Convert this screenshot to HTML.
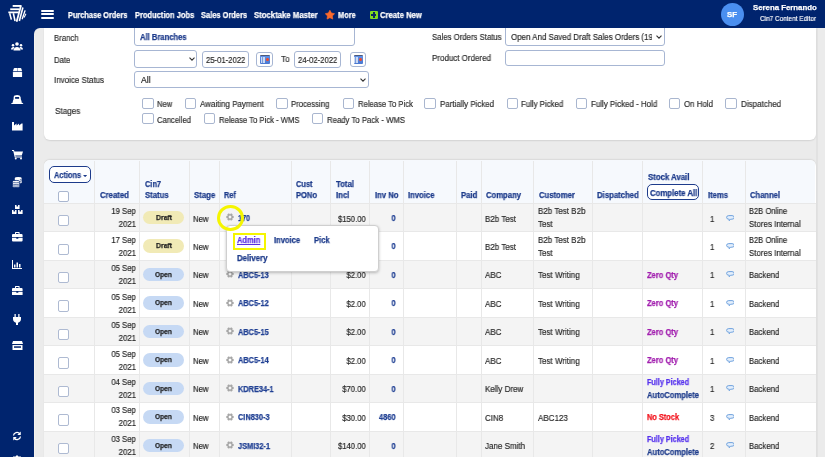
<!DOCTYPE html>
<html><head><meta charset="utf-8"><style>
html,body{margin:0;padding:0;}
body{width:825px;height:457px;overflow:hidden;position:relative;background:#00246e;font-family:"Liberation Sans", sans-serif;}
.a{position:absolute;}
.t{position:absolute;white-space:nowrap;line-height:1;will-change:transform;}
</style></head><body>
<div class="a" style="left:34px;top:28.3px;width:791px;height:440px;background:#ebebeb;border-top-left-radius:6px"></div>
<div class="a" style="left:816px;top:28px;width:2.2px;height:440px;background:#e2e2e2"></div><div class="a" style="left:34.3px;top:36px;width:1px;height:430px;background:#f4f2ee"></div><div class="a" style="left:44px;top:28.3px;width:771.5px;height:111.8px;background:#fff;border-radius:0 0 6px 6px;box-shadow:0 1px 1.5px rgba(0,0,0,.10)"></div>
<div class="a" style="left:44px;top:160.2px;width:771.5px;height:320px;background:#fff;border-radius:6px 6px 0 0;overflow:hidden;box-shadow:0 -0.5px 1.5px rgba(0,0,0,.08)">
  <div class="a" style="left:0;top:0;width:771px;height:42.5px;background:#f6f9fd"></div>
</div>
<div class="a" style="left:142.1px;top:97.9px;width:11.6px;height:10.9px;border:1.15px solid #a9b6cf;border-radius:2px;box-sizing:border-box;background:#fff;"></div><div class="a" style="left:184.8px;top:97.9px;width:11.6px;height:10.9px;border:1.15px solid #a9b6cf;border-radius:2px;box-sizing:border-box;background:#fff;"></div><div class="a" style="left:276.2px;top:97.9px;width:11.6px;height:10.9px;border:1.15px solid #a9b6cf;border-radius:2px;box-sizing:border-box;background:#fff;"></div><div class="a" style="left:342.5px;top:97.9px;width:11.6px;height:10.9px;border:1.15px solid #a9b6cf;border-radius:2px;box-sizing:border-box;background:#fff;"></div><div class="a" style="left:424.4px;top:97.9px;width:11.6px;height:10.9px;border:1.15px solid #a9b6cf;border-radius:2px;box-sizing:border-box;background:#fff;"></div><div class="a" style="left:506.9px;top:97.9px;width:11.6px;height:10.9px;border:1.15px solid #a9b6cf;border-radius:2px;box-sizing:border-box;background:#fff;"></div><div class="a" style="left:575.6px;top:97.9px;width:11.6px;height:10.9px;border:1.15px solid #a9b6cf;border-radius:2px;box-sizing:border-box;background:#fff;"></div><div class="a" style="left:668.9px;top:97.9px;width:11.6px;height:10.9px;border:1.15px solid #a9b6cf;border-radius:2px;box-sizing:border-box;background:#fff;"></div><div class="a" style="left:725.3px;top:97.9px;width:11.6px;height:10.9px;border:1.15px solid #a9b6cf;border-radius:2px;box-sizing:border-box;background:#fff;"></div><div class="a" style="left:142.1px;top:113.4px;width:11.6px;height:10.9px;border:1.15px solid #a9b6cf;border-radius:2px;box-sizing:border-box;background:#fff;"></div><div class="a" style="left:203.9px;top:113.4px;width:11.6px;height:10.9px;border:1.15px solid #a9b6cf;border-radius:2px;box-sizing:border-box;background:#fff;"></div><div class="a" style="left:311.9px;top:113.4px;width:11.6px;height:10.9px;border:1.15px solid #a9b6cf;border-radius:2px;box-sizing:border-box;background:#fff;"></div><div class="a" style="left:134px;top:20px;width:220.8px;height:26.4px;border:1px solid #a7b6d3;border-radius:3px;box-sizing:border-box;background:#fff;"></div><div class="a" style="left:134px;top:50.2px;width:62.8px;height:17.4px;border:1px solid #a7b6d3;border-radius:3px;box-sizing:border-box;background:#fff;"></div><div class="a" style="left:201.5px;top:51.3px;width:47.3px;height:16.7px;border:1px solid #a7b6d3;border-radius:3px;box-sizing:border-box;background:#fff;"></div><div class="a" style="left:294.4px;top:51.3px;width:47px;height:16.7px;border:1px solid #a7b6d3;border-radius:3px;box-sizing:border-box;background:#fff;"></div><div class="a" style="left:134px;top:71px;width:234.6px;height:17.3px;border:1px solid #a7b6d3;border-radius:3px;box-sizing:border-box;background:#fff;"></div><div class="a" style="left:504.6px;top:20px;width:160.2px;height:25.5px;border:1px solid #a7b6d3;border-radius:3px;box-sizing:border-box;background:#fff;"></div><div class="a" style="left:504.6px;top:49.8px;width:160.8px;height:16.4px;border:1px solid #a7b6d3;border-radius:3px;box-sizing:border-box;background:#fff;"></div><div class="a" style="left:256.3px;top:52px;width:16.4px;height:14.9px;border:1px solid #a7b6d3;border-radius:3px;box-sizing:border-box;background:#fff;"></div><div class="a" style="left:260.2px;top:54.7px;width:9.9px;height:9.3px;background:linear-gradient(#4d5a7a 0,#4d5a7a 0.8px,#5f90e8 0.8px,#4a78d0 100%);border-radius:1px;"></div><div class="a" style="left:260.6px;top:57.2px;width:4.5px;height:6px;background:repeating-linear-gradient(90deg,#dfe8f7 0,#dfe8f7 1.2px,#7fa1de 1.2px,#7fa1de 1.6px);opacity:.85;"></div><div class="a" style="left:265.6px;top:57.6px;width:3.4px;height:3.8px;background:#ee4a2a;border-radius:50%;"></div><div class="a" style="left:349.6px;top:52px;width:16.4px;height:14.9px;border:1px solid #a7b6d3;border-radius:3px;box-sizing:border-box;background:#fff;"></div><div class="a" style="left:353.5px;top:54.7px;width:9.9px;height:9.3px;background:linear-gradient(#4d5a7a 0,#4d5a7a 0.8px,#5f90e8 0.8px,#4a78d0 100%);border-radius:1px;"></div><div class="a" style="left:353.9px;top:57.2px;width:4.5px;height:6px;background:repeating-linear-gradient(90deg,#dfe8f7 0,#dfe8f7 1.2px,#7fa1de 1.2px,#7fa1de 1.6px);opacity:.85;"></div><div class="a" style="left:358.9px;top:57.6px;width:3.4px;height:3.8px;background:#ee4a2a;border-radius:50%;"></div><div class="a" style="left:44px;top:202.9px;width:771.5px;height:28.45px;background:#f4f4f4;border-top:1px solid #e8e8e8;box-sizing:border-box;"></div><div class="a" style="left:57.5px;top:215.1px;width:11.4px;height:11.3px;border:1.2px solid #aebad2;border-radius:2px;box-sizing:border-box;background:#fff;"></div><div class="a" style="left:143.2px;top:211.03px;width:40.6px;height:13.4px;background:#f1eab6;border-radius:7px;"></div><svg class="a" style="left:226.3px;top:213.43px" width="8" height="8" viewBox="0 0 16 16"><path fill="#a6a6a6" fill-rule="evenodd" d="M13.11 5.72L15.34 6.05L15.34 9.95L13.11 10.28L12.53 11.29L13.36 13.38L9.98 15.34L8.58 13.57L7.42 13.57L6.02 15.34L2.64 13.38L3.47 11.29L2.89 10.28L0.66 9.95L0.66 6.05L2.89 5.72L3.47 4.71L2.64 2.62L6.02 0.66L7.42 2.43L8.58 2.43L9.98 0.66L13.36 2.62L12.53 4.71ZM8 5.2a2.8 2.8 0 1 0 0.01 0z"/></svg><svg class="a" style="left:725.6px;top:214.53px" width="8.8" height="7.2" viewBox="0 0 22 18"><path fill="#e3eefb" stroke="#6b9fdc" stroke-width="2.4" d="M7 1.5h8a5.5 4.5 0 010 9h-3.5l-3.5 4v-4H7a5.5 4.5 0 010-9z"/></svg><div class="a" style="left:44px;top:231.35px;width:771.5px;height:28.45px;background:#ffffff;border-top:1px solid #e8e8e8;box-sizing:border-box;"></div><div class="a" style="left:57.5px;top:243.55px;width:11.4px;height:11.3px;border:1.2px solid #aebad2;border-radius:2px;box-sizing:border-box;background:#fff;"></div><div class="a" style="left:143.2px;top:239.47px;width:40.6px;height:13.4px;background:#f1eab6;border-radius:7px;"></div><svg class="a" style="left:725.6px;top:242.97px" width="8.8" height="7.2" viewBox="0 0 22 18"><path fill="#e3eefb" stroke="#6b9fdc" stroke-width="2.4" d="M7 1.5h8a5.5 4.5 0 010 9h-3.5l-3.5 4v-4H7a5.5 4.5 0 010-9z"/></svg><div class="a" style="left:44px;top:259.8px;width:771.5px;height:28.45px;background:#f4f4f4;border-top:1px solid #e8e8e8;box-sizing:border-box;"></div><div class="a" style="left:57.5px;top:272px;width:11.4px;height:11.3px;border:1.2px solid #aebad2;border-radius:2px;box-sizing:border-box;background:#fff;"></div><div class="a" style="left:143.2px;top:267.93px;width:40.6px;height:13.4px;background:#c6d9f4;border-radius:7px;"></div><svg class="a" style="left:226.3px;top:270.33px" width="8" height="8" viewBox="0 0 16 16"><path fill="#a6a6a6" fill-rule="evenodd" d="M13.11 5.72L15.34 6.05L15.34 9.95L13.11 10.28L12.53 11.29L13.36 13.38L9.98 15.34L8.58 13.57L7.42 13.57L6.02 15.34L2.64 13.38L3.47 11.29L2.89 10.28L0.66 9.95L0.66 6.05L2.89 5.72L3.47 4.71L2.64 2.62L6.02 0.66L7.42 2.43L8.58 2.43L9.98 0.66L13.36 2.62L12.53 4.71ZM8 5.2a2.8 2.8 0 1 0 0.01 0z"/></svg><svg class="a" style="left:725.6px;top:271.43px" width="8.8" height="7.2" viewBox="0 0 22 18"><path fill="#e3eefb" stroke="#6b9fdc" stroke-width="2.4" d="M7 1.5h8a5.5 4.5 0 010 9h-3.5l-3.5 4v-4H7a5.5 4.5 0 010-9z"/></svg><div class="a" style="left:44px;top:288.25px;width:771.5px;height:28.45px;background:#ffffff;border-top:1px solid #e8e8e8;box-sizing:border-box;"></div><div class="a" style="left:57.5px;top:300.45px;width:11.4px;height:11.3px;border:1.2px solid #aebad2;border-radius:2px;box-sizing:border-box;background:#fff;"></div><div class="a" style="left:143.2px;top:296.38px;width:40.6px;height:13.4px;background:#c6d9f4;border-radius:7px;"></div><svg class="a" style="left:226.3px;top:298.78px" width="8" height="8" viewBox="0 0 16 16"><path fill="#a6a6a6" fill-rule="evenodd" d="M13.11 5.72L15.34 6.05L15.34 9.95L13.11 10.28L12.53 11.29L13.36 13.38L9.98 15.34L8.58 13.57L7.42 13.57L6.02 15.34L2.64 13.38L3.47 11.29L2.89 10.28L0.66 9.95L0.66 6.05L2.89 5.72L3.47 4.71L2.64 2.62L6.02 0.66L7.42 2.43L8.58 2.43L9.98 0.66L13.36 2.62L12.53 4.71ZM8 5.2a2.8 2.8 0 1 0 0.01 0z"/></svg><svg class="a" style="left:725.6px;top:299.88px" width="8.8" height="7.2" viewBox="0 0 22 18"><path fill="#e3eefb" stroke="#6b9fdc" stroke-width="2.4" d="M7 1.5h8a5.5 4.5 0 010 9h-3.5l-3.5 4v-4H7a5.5 4.5 0 010-9z"/></svg><div class="a" style="left:44px;top:316.7px;width:771.5px;height:28.45px;background:#f4f4f4;border-top:1px solid #e8e8e8;box-sizing:border-box;"></div><div class="a" style="left:57.5px;top:328.9px;width:11.4px;height:11.3px;border:1.2px solid #aebad2;border-radius:2px;box-sizing:border-box;background:#fff;"></div><div class="a" style="left:143.2px;top:324.82px;width:40.6px;height:13.4px;background:#c6d9f4;border-radius:7px;"></div><svg class="a" style="left:226.3px;top:327.23px" width="8" height="8" viewBox="0 0 16 16"><path fill="#a6a6a6" fill-rule="evenodd" d="M13.11 5.72L15.34 6.05L15.34 9.95L13.11 10.28L12.53 11.29L13.36 13.38L9.98 15.34L8.58 13.57L7.42 13.57L6.02 15.34L2.64 13.38L3.47 11.29L2.89 10.28L0.66 9.95L0.66 6.05L2.89 5.72L3.47 4.71L2.64 2.62L6.02 0.66L7.42 2.43L8.58 2.43L9.98 0.66L13.36 2.62L12.53 4.71ZM8 5.2a2.8 2.8 0 1 0 0.01 0z"/></svg><svg class="a" style="left:725.6px;top:328.32px" width="8.8" height="7.2" viewBox="0 0 22 18"><path fill="#e3eefb" stroke="#6b9fdc" stroke-width="2.4" d="M7 1.5h8a5.5 4.5 0 010 9h-3.5l-3.5 4v-4H7a5.5 4.5 0 010-9z"/></svg><div class="a" style="left:44px;top:345.15px;width:771.5px;height:28.45px;background:#ffffff;border-top:1px solid #e8e8e8;box-sizing:border-box;"></div><div class="a" style="left:57.5px;top:357.35px;width:11.4px;height:11.3px;border:1.2px solid #aebad2;border-radius:2px;box-sizing:border-box;background:#fff;"></div><div class="a" style="left:143.2px;top:353.27px;width:40.6px;height:13.4px;background:#c6d9f4;border-radius:7px;"></div><svg class="a" style="left:226.3px;top:355.68px" width="8" height="8" viewBox="0 0 16 16"><path fill="#a6a6a6" fill-rule="evenodd" d="M13.11 5.72L15.34 6.05L15.34 9.95L13.11 10.28L12.53 11.29L13.36 13.38L9.98 15.34L8.58 13.57L7.42 13.57L6.02 15.34L2.64 13.38L3.47 11.29L2.89 10.28L0.66 9.95L0.66 6.05L2.89 5.72L3.47 4.71L2.64 2.62L6.02 0.66L7.42 2.43L8.58 2.43L9.98 0.66L13.36 2.62L12.53 4.71ZM8 5.2a2.8 2.8 0 1 0 0.01 0z"/></svg><svg class="a" style="left:725.6px;top:356.77px" width="8.8" height="7.2" viewBox="0 0 22 18"><path fill="#e3eefb" stroke="#6b9fdc" stroke-width="2.4" d="M7 1.5h8a5.5 4.5 0 010 9h-3.5l-3.5 4v-4H7a5.5 4.5 0 010-9z"/></svg><div class="a" style="left:44px;top:373.6px;width:771.5px;height:28.45px;background:#f4f4f4;border-top:1px solid #e8e8e8;box-sizing:border-box;"></div><div class="a" style="left:57.5px;top:385.8px;width:11.4px;height:11.3px;border:1.2px solid #aebad2;border-radius:2px;box-sizing:border-box;background:#fff;"></div><div class="a" style="left:143.2px;top:381.73px;width:40.6px;height:13.4px;background:#c6d9f4;border-radius:7px;"></div><svg class="a" style="left:226.3px;top:384.13px" width="8" height="8" viewBox="0 0 16 16"><path fill="#a6a6a6" fill-rule="evenodd" d="M13.11 5.72L15.34 6.05L15.34 9.95L13.11 10.28L12.53 11.29L13.36 13.38L9.98 15.34L8.58 13.57L7.42 13.57L6.02 15.34L2.64 13.38L3.47 11.29L2.89 10.28L0.66 9.95L0.66 6.05L2.89 5.72L3.47 4.71L2.64 2.62L6.02 0.66L7.42 2.43L8.58 2.43L9.98 0.66L13.36 2.62L12.53 4.71ZM8 5.2a2.8 2.8 0 1 0 0.01 0z"/></svg><svg class="a" style="left:725.6px;top:385.23px" width="8.8" height="7.2" viewBox="0 0 22 18"><path fill="#e3eefb" stroke="#6b9fdc" stroke-width="2.4" d="M7 1.5h8a5.5 4.5 0 010 9h-3.5l-3.5 4v-4H7a5.5 4.5 0 010-9z"/></svg><div class="a" style="left:44px;top:402.05px;width:771.5px;height:28.45px;background:#ffffff;border-top:1px solid #e8e8e8;box-sizing:border-box;"></div><div class="a" style="left:57.5px;top:414.25px;width:11.4px;height:11.3px;border:1.2px solid #aebad2;border-radius:2px;box-sizing:border-box;background:#fff;"></div><div class="a" style="left:143.2px;top:410.18px;width:40.6px;height:13.4px;background:#c6d9f4;border-radius:7px;"></div><svg class="a" style="left:226.3px;top:412.58px" width="8" height="8" viewBox="0 0 16 16"><path fill="#a6a6a6" fill-rule="evenodd" d="M13.11 5.72L15.34 6.05L15.34 9.95L13.11 10.28L12.53 11.29L13.36 13.38L9.98 15.34L8.58 13.57L7.42 13.57L6.02 15.34L2.64 13.38L3.47 11.29L2.89 10.28L0.66 9.95L0.66 6.05L2.89 5.72L3.47 4.71L2.64 2.62L6.02 0.66L7.42 2.43L8.58 2.43L9.98 0.66L13.36 2.62L12.53 4.71ZM8 5.2a2.8 2.8 0 1 0 0.01 0z"/></svg><svg class="a" style="left:725.6px;top:413.68px" width="8.8" height="7.2" viewBox="0 0 22 18"><path fill="#e3eefb" stroke="#6b9fdc" stroke-width="2.4" d="M7 1.5h8a5.5 4.5 0 010 9h-3.5l-3.5 4v-4H7a5.5 4.5 0 010-9z"/></svg><div class="a" style="left:44px;top:430.5px;width:771.5px;height:28.45px;background:#f4f4f4;border-top:1px solid #e8e8e8;box-sizing:border-box;"></div><div class="a" style="left:57.5px;top:442.7px;width:11.4px;height:11.3px;border:1.2px solid #aebad2;border-radius:2px;box-sizing:border-box;background:#fff;"></div><div class="a" style="left:143.2px;top:438.62px;width:40.6px;height:13.4px;background:#c6d9f4;border-radius:7px;"></div><svg class="a" style="left:226.3px;top:441.03px" width="8" height="8" viewBox="0 0 16 16"><path fill="#a6a6a6" fill-rule="evenodd" d="M13.11 5.72L15.34 6.05L15.34 9.95L13.11 10.28L12.53 11.29L13.36 13.38L9.98 15.34L8.58 13.57L7.42 13.57L6.02 15.34L2.64 13.38L3.47 11.29L2.89 10.28L0.66 9.95L0.66 6.05L2.89 5.72L3.47 4.71L2.64 2.62L6.02 0.66L7.42 2.43L8.58 2.43L9.98 0.66L13.36 2.62L12.53 4.71ZM8 5.2a2.8 2.8 0 1 0 0.01 0z"/></svg><svg class="a" style="left:725.6px;top:442.12px" width="8.8" height="7.2" viewBox="0 0 22 18"><path fill="#e3eefb" stroke="#6b9fdc" stroke-width="2.4" d="M7 1.5h8a5.5 4.5 0 010 9h-3.5l-3.5 4v-4H7a5.5 4.5 0 010-9z"/></svg>
<div class="a" style="left:93.9px;top:160.5px;width:1px;height:300px;background:#e8e8e8;"></div><div class="a" style="left:138.9px;top:160.5px;width:1px;height:300px;background:#e8e8e8;"></div><div class="a" style="left:189.1px;top:160.5px;width:1px;height:300px;background:#e8e8e8;"></div><div class="a" style="left:218.7px;top:160.5px;width:1px;height:300px;background:#e8e8e8;"></div><div class="a" style="left:291px;top:160.5px;width:1px;height:300px;background:#e8e8e8;"></div><div class="a" style="left:330.3px;top:160.5px;width:1px;height:300px;background:#e8e8e8;"></div><div class="a" style="left:369.3px;top:160.5px;width:1px;height:300px;background:#e8e8e8;"></div><div class="a" style="left:403.3px;top:160.5px;width:1px;height:300px;background:#e8e8e8;"></div><div class="a" style="left:456.1px;top:160.5px;width:1px;height:300px;background:#e8e8e8;"></div><div class="a" style="left:480.5px;top:160.5px;width:1px;height:300px;background:#e8e8e8;"></div><div class="a" style="left:533.2px;top:160.5px;width:1px;height:300px;background:#e8e8e8;"></div><div class="a" style="left:592px;top:160.5px;width:1px;height:300px;background:#e8e8e8;"></div><div class="a" style="left:642.1px;top:160.5px;width:1px;height:300px;background:#e8e8e8;"></div><div class="a" style="left:702px;top:160.5px;width:1px;height:300px;background:#e8e8e8;"></div><div class="a" style="left:744.9px;top:160.5px;width:1px;height:300px;background:#e8e8e8;"></div>
<div class="a" style="left:48.9px;top:166.1px;width:41.9px;height:16.6px;border:1.7px solid #1d3b8b;border-radius:5px;box-sizing:border-box;background:#fff"></div><svg class="a" style="left:83.3px;top:174.6px" width="4.2" height="2.2" viewBox="0 0 4 2"><path fill="#1d3b8b" d="M0 0h4L2 2z"/></svg><div class="a" style="left:646.8px;top:184.0px;width:52.4px;height:16.2px;border:1.7px solid #1d3b8b;border-radius:5px;box-sizing:border-box;background:#fff"></div><div class="a" style="left:57.8px;top:190.5px;width:11px;height:11px;border:1px solid #a9b6cf;border-radius:2px;box-sizing:border-box;background:#fff"></div>
<svg class="a" style="left:188.8px;top:57px" width="6" height="4" viewBox="0 0 12 8"><path fill="none" stroke="#333" stroke-width="2.2" d="M1 1.2l5 5 5-5"/></svg><svg class="a" style="left:360.4px;top:77.8px" width="6" height="4" viewBox="0 0 12 8"><path fill="none" stroke="#333" stroke-width="2.2" d="M1 1.2l5 5 5-5"/></svg><svg class="a" style="left:656.4px;top:34.8px" width="6" height="4" viewBox="0 0 12 8"><path fill="none" stroke="#333" stroke-width="2.2" d="M1 1.2l5 5 5-5"/></svg>
<div class="a" style="left:0;top:0;width:825px;height:28.3px;background:#00246e"></div><svg class="a" style="left:4px;top:2px" width="30" height="24" viewBox="0 0 571 457"><g stroke="#fff" stroke-linecap="butt" fill="none"><path d="M165 75H322" stroke-width="36"/><path d="M118 138H290" stroke-width="34"/><path d="M82 198H282" stroke-width="34"/><path d="M325 60L240 375" stroke-width="34"/><path d="M108 215L140 335" stroke-width="30"/><path d="M178 215L210 362" stroke-width="30"/><path d="M360 105L292 362" stroke-width="30"/><path d="M402 160L345 330" stroke-width="26"/><path d="M418 225L383 295" stroke-width="20"/></g></svg><div class="a" style="left:40.5px;top:9.9px;width:13px;height:2px;background:#fff;border-radius:1px"></div><div class="a" style="left:40.5px;top:13.3px;width:13px;height:2px;background:#fff;border-radius:1px"></div><div class="a" style="left:40.5px;top:16.8px;width:13px;height:2px;background:#fff;border-radius:1px"></div><svg class="a" style="left:325.0px;top:10.0px" width="9.8" height="9.8" viewBox="0 0 24 24"><path fill="#fb6a2c" stroke="#fb6a2c" stroke-width="1.6" stroke-linejoin="round" d="M12.00 0.60L15.70 7.50L23.41 8.89L17.99 14.55L19.05 22.31L12.00 18.90L4.95 22.31L6.01 14.55L0.59 8.89L8.30 7.50Z"/></svg><div class="a" style="left:369.5px;top:11.0px;width:8.1px;height:8.1px;background:#7fdc1f;border-radius:1px"></div><div class="a" style="left:372.5px;top:12.3px;width:2.1px;height:5.5px;background:#0a2a60"></div><div class="a" style="left:370.8px;top:14.0px;width:5.5px;height:2.1px;background:#0a2a60"></div><div class="a" style="left:720.9px;top:2.7px;width:23.2px;height:23.2px;background:#4a8ff0;border-radius:50%"></div>
<svg class="a" style="left:11.3px;top:42.25px" width="12" height="8.5" viewBox="0 0 24 17"><g fill="#fff"><circle cx="12" cy="4" r="3.6"/><path d="M5 17c0-4 3-7 7-7s7 3 7 7z"/><circle cx="4" cy="6.5" r="2.5"/><circle cx="20" cy="6.5" r="2.5"/><path d="M0 15c0-3 2-5 4.5-5 1 0 2 .3 2.5.8-1.5 1.2-2.3 2.5-2.4 4.2z"/><path d="M24 15c0-3-2-5-4.5-5-1 0-2 .3-2.5.8 1.5 1.2 2.3 2.5 2.4 4.2z"/></g></svg><svg class="a" style="left:9px;top:64px" width="18" height="18" viewBox="0 0 18 18"><g fill="#fff"><path d="M3.9 7.3L4.8 4.5Q5 4.1 5.5 4.1H11.6Q12.1 4.1 12.3 4.5L13.1 7.3Z"/><rect x="3.9" y="7.9" width="9.2" height="5.2" rx="0.6"/></g><rect x="8.2" y="4" width="0.6" height="3.4" fill="#00246e" opacity=".6"/></svg><svg class="a" style="left:9px;top:90px" width="18" height="16" viewBox="0 0 18 16"><g fill="#fff"><path d="M4.4 11.2L4.7 7Q4.9 5.1 8.1 5.1Q11.2 5.1 11.6 7L12.1 11.2Z"/><ellipse cx="8.2" cy="11.3" rx="4.3" ry="2.3"/><path d="M2.2 13.4L5 11.4H11.4L14.2 13.4V14.1H2.2Z"/></g><rect x="6.1" y="7" width="4" height="1.8" fill="#00246e"/></svg><svg class="a" style="left:12px;top:122px" width="10.6" height="8.6" viewBox="0 0 21 17"><path fill="#fff" d="M0 0h4v7l5-4v4l5-4v4l5-4h2v14H0z"/></svg><svg class="a" style="left:11.8px;top:150px" width="11" height="9.6" viewBox="0 0 22 19"><g fill="#fff"><path d="M0 0h4l.8 3H22l-2.5 8H6.5l.5 2H20v2H5.5L2.5 2H0z"/><circle cx="7.5" cy="17" r="2"/><circle cx="18" cy="17" r="2"/></g></svg><svg class="a" style="left:11px;top:176px" width="13" height="13" viewBox="0 0 13 13"><g fill="#fff"><path d="M3.8 2.1a3.45 1.15 0 0 1 6.9 0v4.3a3.45 1.15 0 0 1-6.9 0z"/><path d="M1.4 5.6a3.7 1.2 0 0 1 7.4 0v4.7a3.7 1.2 0 0 1-7.4 0z" stroke="#00246e" stroke-width="0.8"/></g><g fill="none" stroke="#00246e" stroke-width="0.6"><path d="M8.8 3.9a3.45 1.15 0 0 0 1.9-0.9"/><path d="M8.8 5.4a3.45 1.15 0 0 0 1.9-0.9"/><path d="M1.4 7.4a3.7 1.2 0 0 0 7.4 0"/><path d="M1.4 8.9a3.7 1.2 0 0 0 7.4 0"/><path d="M1.4 5.6a3.7 1.2 0 0 0 7.4 0"/></g></svg><svg class="a" style="left:12px;top:204.8px" width="10.6" height="9.6" viewBox="0 0 21 19"><g fill="#fff"><path d="M6 0h3v3h3V0h3v8H6z"/><path d="M0 10h3v3h3v-3h3v9H0z"/><path d="M12 10h3v3h3v-3h3v9h-9z"/></g></svg><svg class="a" style="left:12px;top:232.4px" width="10.6" height="9.6" viewBox="0 0 21 19"><g fill="#fff"><path d="M7 0h7a1 1 0 011 1v3h-2V2H8v2H6V1a1 1 0 011-1z"/><path d="M0 6a2 2 0 012-2h17a2 2 0 012 2v4H0z"/><path d="M0 11.5h8.5v2h4v-2H21V17a2 2 0 01-2 2H2a2 2 0 01-2-2z"/></g></svg><svg class="a" style="left:12.3px;top:259.5px" width="10" height="9" viewBox="0 0 20 18"><g fill="#fff"><path d="M0 0h2v16h18v2H0z"/><rect x="4" y="9" width="3" height="6"/><rect x="9" y="5" width="3" height="10"/><rect x="14" y="8" width="3" height="7"/></g></svg><svg class="a" style="left:12px;top:285.8px" width="10.6" height="9.6" viewBox="0 0 21 19"><g fill="#fff"><path d="M7 0h7a1 1 0 011 1v3h-2V2H8v2H6V1a1 1 0 011-1z"/><path d="M0 6a2 2 0 012-2h17a2 2 0 012 2v4H0z"/><path d="M0 11.5h8.5v2h4v-2H21V17a2 2 0 01-2 2H2a2 2 0 01-2-2z"/></g></svg><svg class="a" style="left:13.3px;top:313.5px" width="8" height="11" viewBox="0 0 16 22"><g fill="#fff"><rect x="3" y="0" width="2.5" height="6"/><rect x="10.5" y="0" width="2.5" height="6"/><path d="M0 6h16v4c0 4-3 7-6 7.5V22H6v-4.5C3 17 0 14 0 10z"/></g></svg><svg class="a" style="left:11.8px;top:340.6px" width="11" height="9.6" viewBox="0 0 22 19"><g fill="#fff"><path d="M2 0h18l2 6H0z"/><path d="M1 8h20v11H1z"/></g><rect x="4" y="10.5" width="14" height="3" fill="#00246e"/></svg><svg class="a" style="left:12.3px;top:431.2px" width="10" height="10" viewBox="0 0 20 20"><g fill="none" stroke="#fff" stroke-width="2.6"><path d="M3 9a7 7 0 0112.5-3.5"/><path d="M17 11a7 7 0 01-12.5 3.5"/></g><g fill="#fff"><path d="M17.5 1v7h-7z"/><path d="M2.5 19v-7h7z"/></g></svg><svg class="a" style="left:12.3px;top:455px" width="10" height="9" viewBox="0 0 20 18"><path fill="#fff" d="M10 0l3 3h5v6H2V3h5z"/></svg>
<div class="t" style="left:68px;top:10.7px;font-size:8.6px;color:#fff;font-weight:700;-webkit-text-stroke:0.25px #fff;transform:scaleX(0.858);transform-origin:left;">Purchase Orders</div><div class="t" style="left:134.7px;top:10.7px;font-size:8.6px;color:#fff;font-weight:700;-webkit-text-stroke:0.25px #fff;transform:scaleX(0.874);transform-origin:left;">Production Jobs</div><div class="t" style="left:200.6px;top:10.7px;font-size:8.6px;color:#fff;font-weight:700;-webkit-text-stroke:0.25px #fff;transform:scaleX(0.869);transform-origin:left;">Sales Orders</div><div class="t" style="left:253.6px;top:10.7px;font-size:8.6px;color:#fff;font-weight:700;-webkit-text-stroke:0.25px #fff;transform:scaleX(0.902);transform-origin:left;">Stocktake Master</div><div class="t" style="left:337.8px;top:10.7px;font-size:8.6px;color:#fff;font-weight:700;-webkit-text-stroke:0.25px #fff;transform:scaleX(0.861);transform-origin:left;">More</div><div class="t" style="left:379.7px;top:10.7px;font-size:8.6px;color:#fff;font-weight:700;-webkit-text-stroke:0.25px #fff;transform:scaleX(0.895);transform-origin:left;">Create New</div><div class="t" style="left:752.7px;top:3.9px;font-size:7.8px;color:#fff;font-weight:700;-webkit-text-stroke:0.25px #fff;">Serena Fernando</div><div class="t" style="left:760.3px;top:15.03px;font-size:7.34px;color:#fff;-webkit-text-stroke:0.18px #fff;transform:scaleX(0.877);transform-origin:left;">Cin7 Content Editor</div><div class="t" style="left:727px;top:10.5px;font-size:7.4px;color:#fff;font-weight:700;-webkit-text-stroke:0.25px #fff;transform:scaleX(1.058);transform-origin:left;">SF</div><div class="t" style="left:53.9px;top:33.98px;font-size:8.64px;color:#2c2c2c;-webkit-text-stroke:0.18px #2c2c2c;transform:scaleX(0.900);transform-origin:left;">Branch</div><div class="t" style="left:53.9px;top:56.08px;font-size:8.64px;color:#2c2c2c;-webkit-text-stroke:0.18px #2c2c2c;transform:scaleX(0.889);transform-origin:left;">Date</div><div class="t" style="left:53.9px;top:75.58px;font-size:8.64px;color:#2c2c2c;-webkit-text-stroke:0.18px #2c2c2c;transform:scaleX(0.925);transform-origin:left;">Invoice Status</div><div class="t" style="left:54.5px;top:107.48px;font-size:8.64px;color:#2c2c2c;-webkit-text-stroke:0.18px #2c2c2c;transform:scaleX(0.942);transform-origin:left;">Stages</div><div class="t" style="left:140px;top:34.2px;font-size:8.2px;color:#1d3b8b;font-weight:700;-webkit-text-stroke:0.25px #1d3b8b;transform:scaleX(0.929);transform-origin:left;">All Branches</div><div class="t" style="left:141px;top:76.48px;font-size:8.64px;color:#262626;-webkit-text-stroke:0.18px #262626;transform:scaleX(0.990);transform-origin:left;">All</div><div class="t" style="left:205.8px;top:55.57px;font-size:8.86px;color:#262626;-webkit-text-stroke:0.18px #262626;transform:scaleX(0.869);transform-origin:left;">25-01-2022</div><div class="t" style="left:298.3px;top:55.57px;font-size:8.86px;color:#262626;-webkit-text-stroke:0.18px #262626;transform:scaleX(0.869);transform-origin:left;">24-02-2022</div><div class="t" style="left:281.2px;top:55.17px;font-size:8.86px;color:#2c2c2c;-webkit-text-stroke:0.18px #2c2c2c;transform:scaleX(0.920);transform-origin:left;">To</div><div class="t" style="left:432px;top:33.38px;font-size:8.64px;color:#2c2c2c;-webkit-text-stroke:0.18px #2c2c2c;transform:scaleX(0.902);transform-origin:left;">Sales Orders Status</div><div class="t" style="left:432px;top:54.38px;font-size:8.64px;color:#2c2c2c;-webkit-text-stroke:0.18px #2c2c2c;transform:scaleX(0.925);transform-origin:left;">Product Ordered</div><div class="a" style="left:505.6px;top:29px;width:146.6px;height:16px;overflow:hidden"><div style="position:absolute;left:-505.6px;top:-29px;width:825px;height:457px"><div class="t" style="left:511px;top:33.07px;font-size:8.86px;color:#262626;-webkit-text-stroke:0.18px #262626;transform:scaleX(0.899);transform-origin:left;">Open And Saved Draft Sales Orders (19)</div></div></div><div class="t" style="left:157.2px;top:100.14px;font-size:8.53px;color:#2c2c2c;-webkit-text-stroke:0.18px #2c2c2c;transform:scaleX(0.892);transform-origin:left;">New</div><div class="t" style="left:199.8px;top:100.14px;font-size:8.53px;color:#2c2c2c;-webkit-text-stroke:0.18px #2c2c2c;transform:scaleX(0.934);transform-origin:left;">Awaiting Payment</div><div class="t" style="left:291.2px;top:100.14px;font-size:8.53px;color:#2c2c2c;-webkit-text-stroke:0.18px #2c2c2c;transform:scaleX(0.909);transform-origin:left;">Processing</div><div class="t" style="left:357.6px;top:100.14px;font-size:8.53px;color:#2c2c2c;-webkit-text-stroke:0.18px #2c2c2c;transform:scaleX(0.900);transform-origin:left;">Release To Pick</div><div class="t" style="left:439.6px;top:100.14px;font-size:8.53px;color:#2c2c2c;-webkit-text-stroke:0.18px #2c2c2c;transform:scaleX(0.928);transform-origin:left;">Partially Picked</div><div class="t" style="left:521.1px;top:100.14px;font-size:8.53px;color:#2c2c2c;-webkit-text-stroke:0.18px #2c2c2c;transform:scaleX(0.919);transform-origin:left;">Fully Picked</div><div class="t" style="left:590.8px;top:100.14px;font-size:8.53px;color:#2c2c2c;-webkit-text-stroke:0.18px #2c2c2c;transform:scaleX(0.934);transform-origin:left;">Fully Picked - Hold</div><div class="t" style="left:684.1px;top:100.14px;font-size:8.53px;color:#2c2c2c;-webkit-text-stroke:0.18px #2c2c2c;transform:scaleX(0.928);transform-origin:left;">On Hold</div><div class="t" style="left:740.6px;top:100.14px;font-size:8.53px;color:#2c2c2c;-webkit-text-stroke:0.18px #2c2c2c;transform:scaleX(0.943);transform-origin:left;">Dispatched</div><div class="t" style="left:157.2px;top:116.33px;font-size:8.53px;color:#2c2c2c;-webkit-text-stroke:0.18px #2c2c2c;transform:scaleX(0.895);transform-origin:left;">Cancelled</div><div class="t" style="left:219.2px;top:116.33px;font-size:8.53px;color:#2c2c2c;-webkit-text-stroke:0.18px #2c2c2c;transform:scaleX(0.902);transform-origin:left;">Release To Pick - WMS</div><div class="t" style="left:326.5px;top:116.33px;font-size:8.53px;color:#2c2c2c;-webkit-text-stroke:0.18px #2c2c2c;transform:scaleX(0.913);transform-origin:left;">Ready To Pack - WMS</div><div class="t" style="left:53.9px;top:170.8px;font-size:8.4px;color:#1d3b8b;font-weight:700;-webkit-text-stroke:0.25px #1d3b8b;transform:scaleX(0.882);transform-origin:left;">Actions</div><div class="t" style="left:100.1px;top:191.3px;font-size:8.4px;color:#1d3b8b;font-weight:700;-webkit-text-stroke:0.25px #1d3b8b;transform:scaleX(0.927);transform-origin:left;">Created</div><div class="t" style="left:144.8px;top:180.4px;font-size:8.4px;color:#1d3b8b;font-weight:700;-webkit-text-stroke:0.25px #1d3b8b;transform:scaleX(0.881);transform-origin:left;">Cin7</div><div class="t" style="left:144.8px;top:191.3px;font-size:8.4px;color:#1d3b8b;font-weight:700;-webkit-text-stroke:0.25px #1d3b8b;transform:scaleX(0.922);transform-origin:left;">Status</div><div class="t" style="left:194px;top:191.3px;font-size:8.4px;color:#1d3b8b;font-weight:700;-webkit-text-stroke:0.25px #1d3b8b;transform:scaleX(0.929);transform-origin:left;">Stage</div><div class="t" style="left:224.4px;top:191.3px;font-size:8.4px;color:#1d3b8b;font-weight:700;-webkit-text-stroke:0.25px #1d3b8b;transform:scaleX(0.874);transform-origin:left;">Ref</div><div class="t" style="left:296.3px;top:180.4px;font-size:8.4px;color:#1d3b8b;font-weight:700;-webkit-text-stroke:0.25px #1d3b8b;transform:scaleX(0.886);transform-origin:left;">Cust</div><div class="t" style="left:296.3px;top:191.3px;font-size:8.4px;color:#1d3b8b;font-weight:700;-webkit-text-stroke:0.25px #1d3b8b;transform:scaleX(0.903);transform-origin:left;">PONo</div><div class="t" style="left:336.1px;top:180.4px;font-size:8.4px;color:#1d3b8b;font-weight:700;-webkit-text-stroke:0.25px #1d3b8b;transform:scaleX(0.928);transform-origin:left;">Total</div><div class="t" style="left:336.1px;top:191.3px;font-size:8.4px;color:#1d3b8b;font-weight:700;-webkit-text-stroke:0.25px #1d3b8b;transform:scaleX(0.935);transform-origin:left;">Incl</div><div class="t" style="left:374.7px;top:191.3px;font-size:8.4px;color:#1d3b8b;font-weight:700;-webkit-text-stroke:0.25px #1d3b8b;transform:scaleX(0.914);transform-origin:left;">Inv No</div><div class="t" style="left:407.7px;top:191.3px;font-size:8.4px;color:#1d3b8b;font-weight:700;-webkit-text-stroke:0.25px #1d3b8b;transform:scaleX(0.915);transform-origin:left;">Invoice</div><div class="t" style="left:461px;top:191.3px;font-size:8.4px;color:#1d3b8b;font-weight:700;-webkit-text-stroke:0.25px #1d3b8b;transform:scaleX(0.922);transform-origin:left;">Paid</div><div class="t" style="left:485.5px;top:191.3px;font-size:8.4px;color:#1d3b8b;font-weight:700;-webkit-text-stroke:0.25px #1d3b8b;transform:scaleX(0.917);transform-origin:left;">Company</div><div class="t" style="left:538.6px;top:191.3px;font-size:8.4px;color:#1d3b8b;font-weight:700;-webkit-text-stroke:0.25px #1d3b8b;transform:scaleX(0.918);transform-origin:left;">Customer</div><div class="t" style="left:596.8px;top:191.3px;font-size:8.4px;color:#1d3b8b;font-weight:700;-webkit-text-stroke:0.25px #1d3b8b;transform:scaleX(0.926);transform-origin:left;">Dispatched</div><div class="t" style="left:647.7px;top:172.5px;font-size:8.4px;color:#1d3b8b;font-weight:700;-webkit-text-stroke:0.25px #1d3b8b;transform:scaleX(0.930);transform-origin:left;">Stock Avail</div><div class="t" style="left:649.5px;top:188.8px;font-size:8.4px;color:#1d3b8b;font-weight:700;-webkit-text-stroke:0.25px #1d3b8b;transform:scaleX(0.929);transform-origin:left;">Complete All</div><div class="t" style="left:707.7px;top:191.3px;font-size:8.4px;color:#1d3b8b;font-weight:700;-webkit-text-stroke:0.25px #1d3b8b;transform:scaleX(0.914);transform-origin:left;">Items</div><div class="t" style="left:749.5px;top:191.3px;font-size:8.4px;color:#1d3b8b;font-weight:700;-webkit-text-stroke:0.25px #1d3b8b;transform:scaleX(0.908);transform-origin:left;">Channel</div><div class="t" style="left:107.37px;top:207.29px;font-size:9.07px;color:#262626;-webkit-text-stroke:0.18px #262626;transform:scaleX(0.847);transform-origin:right;">19 Sep</div><div class="t" style="left:115.93px;top:220.29px;font-size:9.07px;color:#262626;-webkit-text-stroke:0.18px #262626;transform:scaleX(0.870);transform-origin:right;">2021</div><div class="t" style="left:192.7px;top:214.59px;font-size:9.07px;color:#262626;-webkit-text-stroke:0.18px #262626;transform:scaleX(0.861);transform-origin:left;">New</div><div class="t" style="left:155.8px;top:214.03px;font-size:7.8px;color:#1e1e1e;font-weight:700;-webkit-text-stroke:0.25px #1e1e1e;transform:scaleX(0.879);transform-origin:left;">Draft</div><div class="t" style="left:237.9px;top:213.93px;font-size:8.4px;color:#1f3f93;font-weight:700;-webkit-text-stroke:0.25px #1f3f93;transform:scaleX(0.865);transform-origin:left;">170</div><div class="t" style="left:333.03px;top:214.59px;font-size:9.07px;color:#262626;-webkit-text-stroke:0.18px #262626;transform:scaleX(0.847);transform-origin:right;">$150.00</div><div class="t" style="left:391.13px;top:213.93px;font-size:8.4px;color:#1f3f93;font-weight:700;-webkit-text-stroke:0.25px #1f3f93;transform:scaleX(0.900);transform-origin:right;">0</div><div class="t" style="left:484.6px;top:214.59px;font-size:9.07px;color:#262626;-webkit-text-stroke:0.18px #262626;transform:scaleX(0.884);transform-origin:left;">B2b Test</div><div class="t" style="left:537.9px;top:207.29px;font-size:9.07px;color:#262626;-webkit-text-stroke:0.18px #262626;transform:scaleX(0.884);transform-origin:left;">B2b Test B2b</div><div class="t" style="left:537.9px;top:220.29px;font-size:9.07px;color:#262626;-webkit-text-stroke:0.18px #262626;transform:scaleX(0.884);transform-origin:left;">Test</div><div class="t" style="left:709.5px;top:214.59px;font-size:9.07px;color:#262626;-webkit-text-stroke:0.18px #262626;transform:scaleX(0.861);transform-origin:left;">1</div><div class="t" style="left:748.7px;top:207.29px;font-size:9.07px;color:#262626;-webkit-text-stroke:0.18px #262626;transform:scaleX(0.833);transform-origin:left;">B2B Online</div><div class="t" style="left:748.7px;top:220.29px;font-size:9.07px;color:#262626;-webkit-text-stroke:0.18px #262626;transform:scaleX(0.876);transform-origin:left;">Stores Internal</div><div class="t" style="left:107.37px;top:235.74px;font-size:9.07px;color:#262626;-webkit-text-stroke:0.18px #262626;transform:scaleX(0.847);transform-origin:right;">17 Sep</div><div class="t" style="left:115.93px;top:248.74px;font-size:9.07px;color:#262626;-webkit-text-stroke:0.18px #262626;transform:scaleX(0.870);transform-origin:right;">2021</div><div class="t" style="left:192.7px;top:243.04px;font-size:9.07px;color:#262626;-webkit-text-stroke:0.18px #262626;transform:scaleX(0.861);transform-origin:left;">New</div><div class="t" style="left:155.8px;top:242.47px;font-size:7.8px;color:#1e1e1e;font-weight:700;-webkit-text-stroke:0.25px #1e1e1e;transform:scaleX(0.879);transform-origin:left;">Draft</div><div class="t" style="left:391.13px;top:242.38px;font-size:8.4px;color:#1f3f93;font-weight:700;-webkit-text-stroke:0.25px #1f3f93;transform:scaleX(0.900);transform-origin:right;">0</div><div class="t" style="left:484.6px;top:243.04px;font-size:9.07px;color:#262626;-webkit-text-stroke:0.18px #262626;transform:scaleX(0.884);transform-origin:left;">B2b Test</div><div class="t" style="left:537.9px;top:235.74px;font-size:9.07px;color:#262626;-webkit-text-stroke:0.18px #262626;transform:scaleX(0.884);transform-origin:left;">B2b Test B2b</div><div class="t" style="left:537.9px;top:248.74px;font-size:9.07px;color:#262626;-webkit-text-stroke:0.18px #262626;transform:scaleX(0.884);transform-origin:left;">Test</div><div class="t" style="left:709.5px;top:243.04px;font-size:9.07px;color:#262626;-webkit-text-stroke:0.18px #262626;transform:scaleX(0.861);transform-origin:left;">1</div><div class="t" style="left:748.7px;top:235.74px;font-size:9.07px;color:#262626;-webkit-text-stroke:0.18px #262626;transform:scaleX(0.833);transform-origin:left;">B2B Online</div><div class="t" style="left:748.7px;top:248.74px;font-size:9.07px;color:#262626;-webkit-text-stroke:0.18px #262626;transform:scaleX(0.876);transform-origin:left;">Stores Internal</div><div class="t" style="left:107.37px;top:264.19px;font-size:9.07px;color:#262626;-webkit-text-stroke:0.18px #262626;transform:scaleX(0.847);transform-origin:right;">05 Sep</div><div class="t" style="left:115.93px;top:277.19px;font-size:9.07px;color:#262626;-webkit-text-stroke:0.18px #262626;transform:scaleX(0.870);transform-origin:right;">2021</div><div class="t" style="left:192.7px;top:271.49px;font-size:9.07px;color:#262626;-webkit-text-stroke:0.18px #262626;transform:scaleX(0.861);transform-origin:left;">New</div><div class="t" style="left:155.3px;top:270.93px;font-size:7.8px;color:#1e1e1e;font-weight:700;-webkit-text-stroke:0.25px #1e1e1e;transform:scaleX(0.843);transform-origin:left;">Open</div><div class="t" style="left:238px;top:270.83px;font-size:8.4px;color:#1f3f93;font-weight:700;-webkit-text-stroke:0.25px #1f3f93;transform:scaleX(0.880);transform-origin:left;">ABC5-13</div><div class="t" style="left:343.11px;top:271.49px;font-size:9.07px;color:#262626;-webkit-text-stroke:0.18px #262626;transform:scaleX(0.847);transform-origin:right;">$2.00</div><div class="t" style="left:391.13px;top:270.83px;font-size:8.4px;color:#1f3f93;font-weight:700;-webkit-text-stroke:0.25px #1f3f93;transform:scaleX(0.900);transform-origin:right;">0</div><div class="t" style="left:484.6px;top:271.49px;font-size:9.07px;color:#262626;-webkit-text-stroke:0.18px #262626;transform:scaleX(0.884);transform-origin:left;">ABC</div><div class="t" style="left:537.9px;top:271.49px;font-size:9.07px;color:#262626;-webkit-text-stroke:0.18px #262626;transform:scaleX(0.884);transform-origin:left;">Test Writing</div><div class="t" style="left:646.7px;top:270.83px;font-size:8.4px;color:#a11dae;font-weight:700;-webkit-text-stroke:0.25px #a11dae;transform:scaleX(0.900);transform-origin:left;">Zero Qty</div><div class="t" style="left:709.5px;top:271.49px;font-size:9.07px;color:#262626;-webkit-text-stroke:0.18px #262626;transform:scaleX(0.861);transform-origin:left;">1</div><div class="t" style="left:748.7px;top:271.49px;font-size:9.07px;color:#262626;-webkit-text-stroke:0.18px #262626;transform:scaleX(0.859);transform-origin:left;">Backend</div><div class="t" style="left:107.37px;top:292.64px;font-size:9.07px;color:#262626;-webkit-text-stroke:0.18px #262626;transform:scaleX(0.847);transform-origin:right;">05 Sep</div><div class="t" style="left:115.93px;top:305.64px;font-size:9.07px;color:#262626;-webkit-text-stroke:0.18px #262626;transform:scaleX(0.870);transform-origin:right;">2021</div><div class="t" style="left:192.7px;top:299.94px;font-size:9.07px;color:#262626;-webkit-text-stroke:0.18px #262626;transform:scaleX(0.861);transform-origin:left;">New</div><div class="t" style="left:155.3px;top:299.38px;font-size:7.8px;color:#1e1e1e;font-weight:700;-webkit-text-stroke:0.25px #1e1e1e;transform:scaleX(0.843);transform-origin:left;">Open</div><div class="t" style="left:238px;top:299.28px;font-size:8.4px;color:#1f3f93;font-weight:700;-webkit-text-stroke:0.25px #1f3f93;transform:scaleX(0.880);transform-origin:left;">ABC5-12</div><div class="t" style="left:343.11px;top:299.94px;font-size:9.07px;color:#262626;-webkit-text-stroke:0.18px #262626;transform:scaleX(0.847);transform-origin:right;">$2.00</div><div class="t" style="left:391.13px;top:299.28px;font-size:8.4px;color:#1f3f93;font-weight:700;-webkit-text-stroke:0.25px #1f3f93;transform:scaleX(0.900);transform-origin:right;">0</div><div class="t" style="left:484.6px;top:299.94px;font-size:9.07px;color:#262626;-webkit-text-stroke:0.18px #262626;transform:scaleX(0.884);transform-origin:left;">ABC</div><div class="t" style="left:537.9px;top:299.94px;font-size:9.07px;color:#262626;-webkit-text-stroke:0.18px #262626;transform:scaleX(0.884);transform-origin:left;">Test Writing</div><div class="t" style="left:646.7px;top:299.28px;font-size:8.4px;color:#a11dae;font-weight:700;-webkit-text-stroke:0.25px #a11dae;transform:scaleX(0.900);transform-origin:left;">Zero Qty</div><div class="t" style="left:709.5px;top:299.94px;font-size:9.07px;color:#262626;-webkit-text-stroke:0.18px #262626;transform:scaleX(0.861);transform-origin:left;">1</div><div class="t" style="left:748.7px;top:299.94px;font-size:9.07px;color:#262626;-webkit-text-stroke:0.18px #262626;transform:scaleX(0.859);transform-origin:left;">Backend</div><div class="t" style="left:107.37px;top:321.09px;font-size:9.07px;color:#262626;-webkit-text-stroke:0.18px #262626;transform:scaleX(0.847);transform-origin:right;">05 Sep</div><div class="t" style="left:115.93px;top:334.09px;font-size:9.07px;color:#262626;-webkit-text-stroke:0.18px #262626;transform:scaleX(0.870);transform-origin:right;">2021</div><div class="t" style="left:192.7px;top:328.39px;font-size:9.07px;color:#262626;-webkit-text-stroke:0.18px #262626;transform:scaleX(0.861);transform-origin:left;">New</div><div class="t" style="left:155.3px;top:327.83px;font-size:7.8px;color:#1e1e1e;font-weight:700;-webkit-text-stroke:0.25px #1e1e1e;transform:scaleX(0.843);transform-origin:left;">Open</div><div class="t" style="left:238px;top:327.73px;font-size:8.4px;color:#1f3f93;font-weight:700;-webkit-text-stroke:0.25px #1f3f93;transform:scaleX(0.880);transform-origin:left;">ABC5-15</div><div class="t" style="left:343.11px;top:328.39px;font-size:9.07px;color:#262626;-webkit-text-stroke:0.18px #262626;transform:scaleX(0.847);transform-origin:right;">$2.00</div><div class="t" style="left:391.13px;top:327.73px;font-size:8.4px;color:#1f3f93;font-weight:700;-webkit-text-stroke:0.25px #1f3f93;transform:scaleX(0.900);transform-origin:right;">0</div><div class="t" style="left:484.6px;top:328.39px;font-size:9.07px;color:#262626;-webkit-text-stroke:0.18px #262626;transform:scaleX(0.884);transform-origin:left;">ABC</div><div class="t" style="left:537.9px;top:328.39px;font-size:9.07px;color:#262626;-webkit-text-stroke:0.18px #262626;transform:scaleX(0.884);transform-origin:left;">Test Writing</div><div class="t" style="left:646.7px;top:327.73px;font-size:8.4px;color:#a11dae;font-weight:700;-webkit-text-stroke:0.25px #a11dae;transform:scaleX(0.900);transform-origin:left;">Zero Qty</div><div class="t" style="left:709.5px;top:328.39px;font-size:9.07px;color:#262626;-webkit-text-stroke:0.18px #262626;transform:scaleX(0.861);transform-origin:left;">1</div><div class="t" style="left:748.7px;top:328.39px;font-size:9.07px;color:#262626;-webkit-text-stroke:0.18px #262626;transform:scaleX(0.859);transform-origin:left;">Backend</div><div class="t" style="left:107.37px;top:349.54px;font-size:9.07px;color:#262626;-webkit-text-stroke:0.18px #262626;transform:scaleX(0.847);transform-origin:right;">05 Sep</div><div class="t" style="left:115.93px;top:362.54px;font-size:9.07px;color:#262626;-webkit-text-stroke:0.18px #262626;transform:scaleX(0.870);transform-origin:right;">2021</div><div class="t" style="left:192.7px;top:356.84px;font-size:9.07px;color:#262626;-webkit-text-stroke:0.18px #262626;transform:scaleX(0.861);transform-origin:left;">New</div><div class="t" style="left:155.3px;top:356.28px;font-size:7.8px;color:#1e1e1e;font-weight:700;-webkit-text-stroke:0.25px #1e1e1e;transform:scaleX(0.843);transform-origin:left;">Open</div><div class="t" style="left:238px;top:356.18px;font-size:8.4px;color:#1f3f93;font-weight:700;-webkit-text-stroke:0.25px #1f3f93;transform:scaleX(0.880);transform-origin:left;">ABC5-14</div><div class="t" style="left:343.11px;top:356.84px;font-size:9.07px;color:#262626;-webkit-text-stroke:0.18px #262626;transform:scaleX(0.847);transform-origin:right;">$2.00</div><div class="t" style="left:391.13px;top:356.18px;font-size:8.4px;color:#1f3f93;font-weight:700;-webkit-text-stroke:0.25px #1f3f93;transform:scaleX(0.900);transform-origin:right;">0</div><div class="t" style="left:484.6px;top:356.84px;font-size:9.07px;color:#262626;-webkit-text-stroke:0.18px #262626;transform:scaleX(0.884);transform-origin:left;">ABC</div><div class="t" style="left:537.9px;top:356.84px;font-size:9.07px;color:#262626;-webkit-text-stroke:0.18px #262626;transform:scaleX(0.884);transform-origin:left;">Test Writing</div><div class="t" style="left:646.7px;top:356.18px;font-size:8.4px;color:#a11dae;font-weight:700;-webkit-text-stroke:0.25px #a11dae;transform:scaleX(0.900);transform-origin:left;">Zero Qty</div><div class="t" style="left:709.5px;top:356.84px;font-size:9.07px;color:#262626;-webkit-text-stroke:0.18px #262626;transform:scaleX(0.861);transform-origin:left;">1</div><div class="t" style="left:748.7px;top:356.84px;font-size:9.07px;color:#262626;-webkit-text-stroke:0.18px #262626;transform:scaleX(0.859);transform-origin:left;">Backend</div><div class="t" style="left:107.37px;top:377.99px;font-size:9.07px;color:#262626;-webkit-text-stroke:0.18px #262626;transform:scaleX(0.847);transform-origin:right;">04 Sep</div><div class="t" style="left:115.93px;top:390.99px;font-size:9.07px;color:#262626;-webkit-text-stroke:0.18px #262626;transform:scaleX(0.870);transform-origin:right;">2021</div><div class="t" style="left:192.7px;top:385.29px;font-size:9.07px;color:#262626;-webkit-text-stroke:0.18px #262626;transform:scaleX(0.861);transform-origin:left;">New</div><div class="t" style="left:155.3px;top:384.73px;font-size:7.8px;color:#1e1e1e;font-weight:700;-webkit-text-stroke:0.25px #1e1e1e;transform:scaleX(0.843);transform-origin:left;">Open</div><div class="t" style="left:238px;top:384.63px;font-size:8.4px;color:#1f3f93;font-weight:700;-webkit-text-stroke:0.25px #1f3f93;transform:scaleX(0.880);transform-origin:left;">KDRE34-1</div><div class="t" style="left:338.08px;top:385.29px;font-size:9.07px;color:#262626;-webkit-text-stroke:0.18px #262626;transform:scaleX(0.847);transform-origin:right;">$70.00</div><div class="t" style="left:391.13px;top:384.63px;font-size:8.4px;color:#1f3f93;font-weight:700;-webkit-text-stroke:0.25px #1f3f93;transform:scaleX(0.900);transform-origin:right;">0</div><div class="t" style="left:484.6px;top:385.29px;font-size:9.07px;color:#262626;-webkit-text-stroke:0.18px #262626;transform:scaleX(0.884);transform-origin:left;">Kelly Drew</div><div class="t" style="left:646.8px;top:378.33px;font-size:8.4px;color:#5530ee;font-weight:700;-webkit-text-stroke:0.25px #5530ee;transform:scaleX(0.861);transform-origin:left;">Fully Picked</div><div class="t" style="left:646.8px;top:391.33px;font-size:8.4px;color:#1d3b8b;font-weight:700;-webkit-text-stroke:0.25px #1d3b8b;transform:scaleX(0.909);transform-origin:left;">AutoComplete</div><div class="t" style="left:709.5px;top:385.29px;font-size:9.07px;color:#262626;-webkit-text-stroke:0.18px #262626;transform:scaleX(0.861);transform-origin:left;">1</div><div class="t" style="left:748.7px;top:385.29px;font-size:9.07px;color:#262626;-webkit-text-stroke:0.18px #262626;transform:scaleX(0.859);transform-origin:left;">Backend</div><div class="t" style="left:107.37px;top:406.44px;font-size:9.07px;color:#262626;-webkit-text-stroke:0.18px #262626;transform:scaleX(0.847);transform-origin:right;">03 Sep</div><div class="t" style="left:115.93px;top:419.44px;font-size:9.07px;color:#262626;-webkit-text-stroke:0.18px #262626;transform:scaleX(0.870);transform-origin:right;">2021</div><div class="t" style="left:192.7px;top:413.74px;font-size:9.07px;color:#262626;-webkit-text-stroke:0.18px #262626;transform:scaleX(0.861);transform-origin:left;">New</div><div class="t" style="left:155.3px;top:413.18px;font-size:7.8px;color:#1e1e1e;font-weight:700;-webkit-text-stroke:0.25px #1e1e1e;transform:scaleX(0.843);transform-origin:left;">Open</div><div class="t" style="left:238px;top:413.08px;font-size:8.4px;color:#1f3f93;font-weight:700;-webkit-text-stroke:0.25px #1f3f93;transform:scaleX(0.880);transform-origin:left;">CIN830-3</div><div class="t" style="left:338.08px;top:413.74px;font-size:9.07px;color:#262626;-webkit-text-stroke:0.18px #262626;transform:scaleX(0.847);transform-origin:right;">$30.00</div><div class="t" style="left:377.16px;top:413.08px;font-size:8.4px;color:#1f3f93;font-weight:700;-webkit-text-stroke:0.25px #1f3f93;transform:scaleX(0.900);transform-origin:right;">4860</div><div class="t" style="left:484.6px;top:413.74px;font-size:9.07px;color:#262626;-webkit-text-stroke:0.18px #262626;transform:scaleX(0.884);transform-origin:left;">CIN8</div><div class="t" style="left:537.9px;top:413.74px;font-size:9.07px;color:#262626;-webkit-text-stroke:0.18px #262626;transform:scaleX(0.884);transform-origin:left;">ABC123</div><div class="t" style="left:646.8px;top:413.08px;font-size:8.4px;color:#f2101a;font-weight:700;-webkit-text-stroke:0.25px #f2101a;transform:scaleX(0.881);transform-origin:left;">No Stock</div><div class="t" style="left:709.5px;top:413.74px;font-size:9.07px;color:#262626;-webkit-text-stroke:0.18px #262626;transform:scaleX(0.861);transform-origin:left;">3</div><div class="t" style="left:748.7px;top:413.74px;font-size:9.07px;color:#262626;-webkit-text-stroke:0.18px #262626;transform:scaleX(0.859);transform-origin:left;">Backend</div><div class="t" style="left:107.37px;top:434.89px;font-size:9.07px;color:#262626;-webkit-text-stroke:0.18px #262626;transform:scaleX(0.847);transform-origin:right;">03 Sep</div><div class="t" style="left:115.93px;top:447.89px;font-size:9.07px;color:#262626;-webkit-text-stroke:0.18px #262626;transform:scaleX(0.870);transform-origin:right;">2021</div><div class="t" style="left:192.7px;top:442.19px;font-size:9.07px;color:#262626;-webkit-text-stroke:0.18px #262626;transform:scaleX(0.861);transform-origin:left;">New</div><div class="t" style="left:155.3px;top:441.63px;font-size:7.8px;color:#1e1e1e;font-weight:700;-webkit-text-stroke:0.25px #1e1e1e;transform:scaleX(0.843);transform-origin:left;">Open</div><div class="t" style="left:238px;top:441.53px;font-size:8.4px;color:#1f3f93;font-weight:700;-webkit-text-stroke:0.25px #1f3f93;transform:scaleX(0.880);transform-origin:left;">JSMI32-1</div><div class="t" style="left:333.03px;top:442.19px;font-size:9.07px;color:#262626;-webkit-text-stroke:0.18px #262626;transform:scaleX(0.847);transform-origin:right;">$140.00</div><div class="t" style="left:391.13px;top:441.53px;font-size:8.4px;color:#1f3f93;font-weight:700;-webkit-text-stroke:0.25px #1f3f93;transform:scaleX(0.900);transform-origin:right;">0</div><div class="t" style="left:484.6px;top:442.19px;font-size:9.07px;color:#262626;-webkit-text-stroke:0.18px #262626;transform:scaleX(0.884);transform-origin:left;">Jane Smith</div><div class="t" style="left:646.8px;top:435.23px;font-size:8.4px;color:#5530ee;font-weight:700;-webkit-text-stroke:0.25px #5530ee;transform:scaleX(0.861);transform-origin:left;">Fully Picked</div><div class="t" style="left:646.8px;top:448.23px;font-size:8.4px;color:#1d3b8b;font-weight:700;-webkit-text-stroke:0.25px #1d3b8b;transform:scaleX(0.909);transform-origin:left;">AutoComplete</div><div class="t" style="left:709.5px;top:442.19px;font-size:9.07px;color:#262626;-webkit-text-stroke:0.18px #262626;transform:scaleX(0.861);transform-origin:left;">2</div><div class="t" style="left:748.7px;top:442.19px;font-size:9.07px;color:#262626;-webkit-text-stroke:0.18px #262626;transform:scaleX(0.859);transform-origin:left;">Backend</div>
<div class="a" style="left:226.4px;top:225.0px;width:153.0px;height:47.0px;background:#fff;border:1px solid #cfcfcf;border-radius:4px;box-sizing:border-box;box-shadow:0 1px 3px rgba(0,0,0,.25)"></div>
<div class="t" style="left:237.3px;top:235.9px;font-size:8.4px;color:#5a2fe0;font-weight:700;-webkit-text-stroke:0.25px #5a2fe0;transform:scaleX(0.894);transform-origin:left;text-decoration:underline;">Admin</div><div class="t" style="left:274.4px;top:235.9px;font-size:8.4px;color:#1d3b8b;font-weight:700;-webkit-text-stroke:0.25px #1d3b8b;transform:scaleX(0.904);transform-origin:left;">Invoice</div><div class="t" style="left:314.3px;top:235.9px;font-size:8.4px;color:#1d3b8b;font-weight:700;-webkit-text-stroke:0.25px #1d3b8b;transform:scaleX(0.911);transform-origin:left;">Pick</div><div class="t" style="left:236.8px;top:254.4px;font-size:8.4px;color:#1d3b8b;font-weight:700;-webkit-text-stroke:0.25px #1d3b8b;transform:scaleX(0.933);transform-origin:left;">Delivery</div>
<div class="a" style="left:232.5px;top:232.7px;width:33.1px;height:17px;border:2.2px solid #f5f500;box-sizing:border-box"></div><div class="a" style="left:216.9px;top:204.5px;width:27.3px;height:26.7px;border:3.2px solid #f5f500;border-radius:50%;box-sizing:border-box"></div>
</body></html>
